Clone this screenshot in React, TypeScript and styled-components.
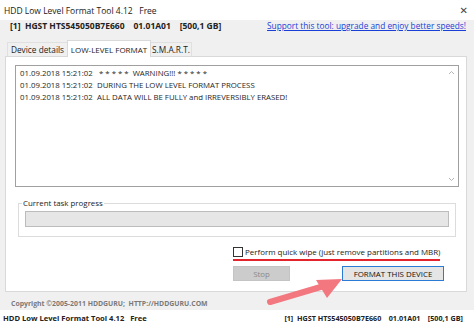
import React from "react";
import styled, { createGlobalStyle } from "styled-components";

const Global = createGlobalStyle`
  html, body { margin: 0; padding: 0; background: #ffffff; }
  body { font-family: "Open Sans", "Noto Sans", sans-serif; }
`;

const Window = styled.div`
  position: relative;
  width: 474px;
  height: 325px;
  overflow: hidden;
  display: flex;
  flex-direction: column;
  background: #ffffff;
  color: #1a1a1a;
`;

const TitleBar = styled.div`
  height: 20px;
  flex: none;
  display: flex;
  align-items: center;
  justify-content: space-between;
  padding: 0 6px 0 4px;
  font-size: 8.5px;
  background: #ffffff;
`;

const Close = styled.span`
  font-size: 10px;
  color: #444;
  font-family: "DejaVu Sans", sans-serif;
`;

const Body = styled.div`
  flex: none;
  height: 290px;
  background: #f0f0f0;
  display: flex;
  flex-direction: column;
`;

const DeviceRow = styled.div`
  height: 11px;
  display: flex;
  align-items: center;
  justify-content: space-between;
  padding: 0 8px 0 10px;
  font-size: 8.5px;
`;

const DeviceText = styled.span`
  font-weight: 700;
  white-space: pre;
  color: #222;
`;

const Link = styled.a`
  color: #1a3fd8;
  text-decoration: underline;
  font-size: 8.3px;
`;

const Tabs = styled.div`
  margin-top: 10px;
  height: 16px;
  display: flex;
  align-items: flex-end;
  padding-left: 7px;
`;

const Tab = styled.div<{ $active?: boolean; $w: number }>`
  width: ${(p) => p.$w}px;
  height: ${(p) => (p.$active ? 17 : 15)}px;
  box-sizing: border-box;
  display: flex;
  align-items: center;
  justify-content: center;
  font-size: ${(p) => (p.$active ? 8 : 8.3)}px;
  background: ${(p) => (p.$active ? "#ffffff" : "#f0f0f0")};
  border: 1px solid ${(p) => (p.$active ? "#d9d9d9" : "#e0e0e0")};
  border-bottom: ${(p) => (p.$active ? "none" : "1px solid #d9d9d9")};
  margin-right: -1px;
  position: relative;
  z-index: ${(p) => (p.$active ? 1 : 0)};
  color: #222;
`;

const Panel = styled.div`
  margin: -1px 7px 0 5px;
  height: 236px;
  flex: none;
  box-sizing: border-box;
  background: #ffffff;
  border: 1px solid #d9d9d9;
  padding: 8px 7px 0 9px;
  display: flex;
  flex-direction: column;
`;

const LogBox = styled.div`
  height: 122px;
  flex: none;
  box-sizing: border-box;
  border: 1px solid #a0a0a0;
  display: flex;
  font-size: 7.8px;
`;

const LogLines = styled.div`
  flex: 1;
  padding: 1px 0 0 4px;
  display: flex;
  flex-direction: column;
`;

const LogLine = styled.div`
  display: flex;
  height: 12px;
  align-items: center;
  white-space: pre;
  color: #1e1e1e;
`;

const LogTime = styled.span`
  width: 77px;
  flex: none;
`;

const ScrollBar = styled.div`
  width: 14px;
  flex: none;
  display: flex;
  flex-direction: column;
  justify-content: space-between;
  align-items: center;
  padding: 4px 0 4px;
`;

const Group = styled.fieldset`
  margin: 11px 3px 0 3px;
  padding: 3px 6px 6px 6px;
  border: 1px solid #dcdcdc;
  border-radius: 0;
  height: 39px;
  box-sizing: border-box;
  min-width: 0;
  flex: none;
`;

const Legend = styled.legend`
  font-size: 7.9px;
  padding: 0 1px;
  margin-left: -3px;
  color: #222;
`;

const Bar = styled.div`
  height: 16px;
  background: #e6e6e6;
  border: 1px solid #bcbcbc;
  box-sizing: border-box;
`;

const CheckRow = styled.label`
  margin-top: 10px;
  padding-left: 218px;
  display: flex;
  align-items: center;
  gap: 2px;
  font-size: 7.95px;
  color: #222;
`;

const Box = styled.span`
  width: 8px;
  height: 8px;
  border: 1px solid #333;
  background: #fff;
  flex: none;
`;

const RedLine = styled.div`
  margin-left: 218px;
  width: 207px;
  height: 2px;
  background: #e4232c;
  margin-top: 2px;
`;

const ButtonRow = styled.div`
  margin-top: 5px;
  padding-left: 218px;
  display: flex;
  gap: 52px;
`;

const Button = styled.div<{ $primary?: boolean; $w: number }>`
  width: ${(p) => p.$w}px;
  height: 15px;
  box-sizing: border-box;
  display: flex;
  align-items: center;
  justify-content: center;
  font-size: 7.9px;
  background: ${(p) => (p.$primary ? "#e5e5e5" : "#cccccc")};
  border: 1px solid ${(p) => (p.$primary ? "#2a7ad6" : "#c4c4c4")};
  color: ${(p) => (p.$primary ? "#111" : "#8a8a8a")};
`;

const Copyright = styled.div`
  flex: 1;
  display: flex;
  align-items: center;
  padding: 4px 0 0 11px;
  font-size: 6.9px;
  color: #7a7a7a;
  font-weight: 700;
`;

const Status = styled.div`
  flex: 1;
  display: flex;
  align-items: center;
  justify-content: space-between;
  padding: 1px 11px 0 3px;
  font-weight: 700;
  background: #ffffff;
  white-space: pre;
  color: #222;
`;

const StatusLeft = styled.span`
  font-size: 7.6px;
`;

const StatusRight = styled.span`
  font-size: 7.2px;
`;

const Arrow = styled.svg`
  position: absolute;
  left: 260px;
  top: 270px;
  width: 90px;
  height: 40px;
  pointer-events: none;
`;

const Chevron = ({ up }: { up?: boolean }) => (
  <svg width="7" height="5" viewBox="0 0 7 5">
    <path
      d={up ? "M1 4 L3.5 1.5 L6 4" : "M1 1 L3.5 3.5 L6 1"}
      fill="none"
      stroke="#b5b5b5"
      strokeWidth="1"
    />
  </svg>
);

export default function App() {
  return (
    <>
      <Global />
      <Window>
        <TitleBar>
          <span>HDD Low Level Format Tool 4.12&nbsp;&nbsp; Free</span>
          <Close>✕</Close>
        </TitleBar>
        <Body>
          <DeviceRow>
            <DeviceText>{"[1]  HGST HTS545050B7E660    01.01A01    [500,1 GB]"}</DeviceText>
            <Link>Support this tool: upgrade and enjoy better speeds!</Link>
          </DeviceRow>
          <Tabs>
            <Tab $w={61}>Device details</Tab>
            <Tab $w={84} $active>LOW-LEVEL FORMAT</Tab>
            <Tab $w={42}>S.M.A.R.T.</Tab>
          </Tabs>
          <Panel>
            <LogBox>
              <LogLines>
                <LogLine>
                  <LogTime>01.09.2018 15:21:02</LogTime>
                  <span>{" * * * * *  WARNING!!! * * * * *"}</span>
                </LogLine>
                <LogLine>
                  <LogTime>01.09.2018 15:21:02</LogTime>
                  <span>DURING THE LOW LEVEL FORMAT PROCESS</span>
                </LogLine>
                <LogLine>
                  <LogTime>01.09.2018 15:21:02</LogTime>
                  <span>ALL DATA WILL BE FULLY and IRREVERSIBLY ERASED!</span>
                </LogLine>
              </LogLines>
              <ScrollBar>
                <Chevron up />
                <Chevron />
              </ScrollBar>
            </LogBox>
            <Group>
              <Legend>Current task progress</Legend>
              <Bar />
            </Group>
            <CheckRow>
              <Box />
              <span>Perform quick wipe (just remove partitions and MBR)</span>
            </CheckRow>
            <RedLine />
            <ButtonRow>
              <Button $w={57}>Stop</Button>
              <Button $w={102} $primary>FORMAT THIS DEVICE</Button>
            </ButtonRow>
          </Panel>
          <Copyright>Copyright ©2005-2011 HDDGURU;&nbsp; HTTP://HDDGURU.COM</Copyright>
        </Body>
        <Status>
          <StatusLeft>HDD Low Level Format Tool 4.12&nbsp;&nbsp; Free</StatusLeft>
          <StatusRight>{"[1]  HGST HTS545050B7E660    01.01A01    [500,1 GB]"}</StatusRight>
        </Status>
        <Arrow viewBox="0 0 90 40">
          <line x1="10" y1="32" x2="64" y2="16" stroke="#f2777f" strokeWidth="6" strokeLinecap="round" />
          <polygon points="82,9 56,10 67,28" fill="#f2777f" />
        </Arrow>
      </Window>
    </>
  );
}
